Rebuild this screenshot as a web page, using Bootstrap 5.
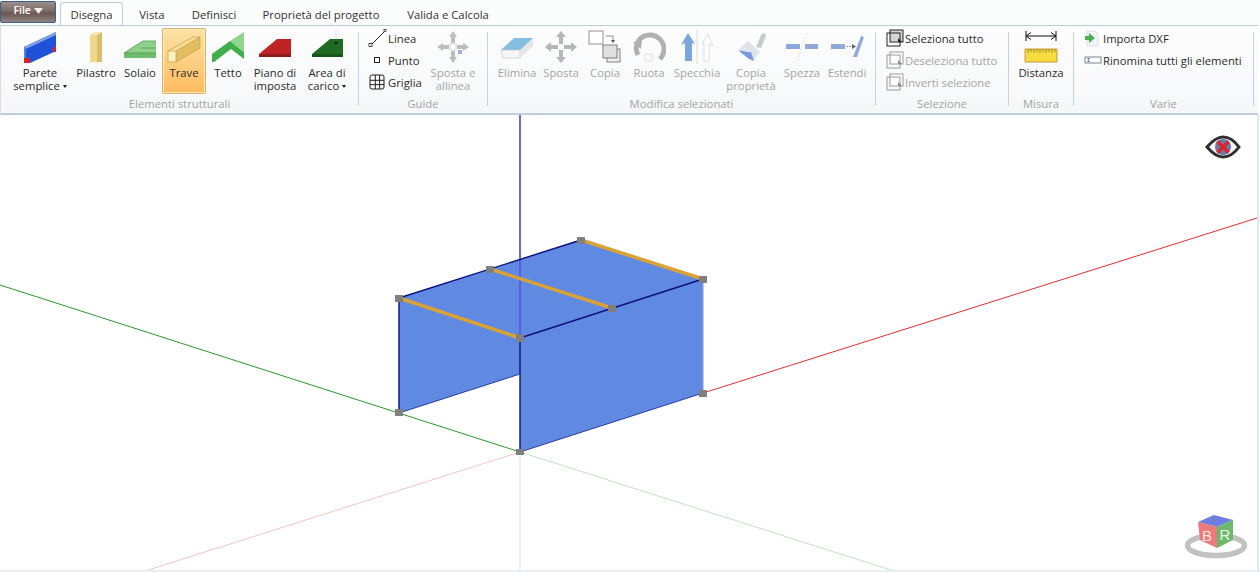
<!DOCTYPE html>
<html lang="it"><head><meta charset="utf-8"><title>Disegna</title>
<link href="https://cdn.jsdelivr.net/npm/bootstrap@5.3.0/dist/css/bootstrap.min.css" rel="stylesheet">
<style>
html,body{height:100%;overflow:hidden}
body{font-family:"Open Sans","Liberation Sans",sans-serif;font-size:11.3px;color:#2b2b2b;background:#fff;width:1260px;height:572px}
.top-bar{height:25px;background:#fbfcfc}
.file-btn{width:56px;height:22px;margin-top:1px;padding:0 0 2px;font-size:10.5px;font-weight:600;color:#fff;border:1px solid #3f5f8f;border-radius:2px;background:linear-gradient(#9a8f8c,#7e6b66 45%,#6a5651 55%,#8f8481)}
.file-btn:hover{color:#fff}
.tab-list{margin-left:4px;border:0;height:25px;flex-wrap:nowrap}
.tab-link{display:block;padding:0;height:23px;margin-top:2px;line-height:23px;text-align:center;color:#333;font-size:11.3px;text-decoration:none;border:1px solid transparent;border-bottom:0;white-space:nowrap}
.tab-link.on{background:#fff;border-color:#bccbd9;border-radius:3px 3px 0 0;height:24px}
.w-t1{width:63px}.w-t2{width:58px}.w-t3{width:66px}.w-t4{width:148px}.w-t5{width:106px}
.ribbon{height:90px;background:linear-gradient(#fdfdfe,#f6f7f8);border-top:1px solid #bccbd9;border-bottom:2px solid #bfcfdc;border-left:1px solid #d5dfe8;width:1258px}
.rb-group{flex:none;padding-top:2px}
.g1{width:357px}.g2{width:128px}.g3{width:387px}.g4{width:132px}.g5{width:64px}.g6{width:179px}
.rb-sep{flex:none;width:1px;height:74px;margin-top:6px;background:#c5d2df}
.rb-items{height:66px}
.rb-label{height:19px;line-height:19px;text-align:center;color:#a3a3a3;font-size:11.3px}
.rb-big{flex:none;display:flex;flex-direction:column;justify-content:flex-start;align-items:center;height:66px;padding:0;border:1px solid transparent;border-radius:2px;font-size:11.3px;line-height:13px;color:#2b2b2b;text-align:center;white-space:nowrap}
.rb-big svg{display:block;margin:1px auto 2px;flex:none}
.rb-big.disabled{color:#a5a5a5;opacity:1;border-color:transparent}
.rb-big.sel{background:linear-gradient(#fde3a5,#fdbb5f);border-color:#d8b26a;box-shadow:inset 0 0 0 1px #fee9b8}
.caret-mini{display:inline-block;border:2.5px solid transparent;border-top:3px solid #222;border-bottom:0;vertical-align:2px;margin-left:3px}
.w44{width:44px}.w46{width:46px}.w50{width:50px}.w52{width:52px}.w54{width:54px}.w56{width:56px}
.ml11{margin-left:11px}.mr6{margin-right:6px}.ml7{margin-left:7px}.ml5{margin-left:5px}
.rows1{width:61px;margin-left:8px}
.rows-up{margin-top:-1px;margin-bottom:1px}
.rb-row{height:22px;line-height:21px;white-space:nowrap;font-size:11.3px;color:#2b2b2b}
.rb-row.off{color:#a5a5a5}
.rb-row svg{flex:none}
.ic19{width:19px}
.ic21{width:21px}
.ind10{margin-left:10px}
.stage{height:457px;width:1260px}
.stage svg{display:block}
</style></head>
<body class="d-flex flex-column">
<div class="top-bar d-flex">
  <button class="btn file-btn" type="button">File <svg width="9" height="6" viewBox="0 0 9 6"><path d="M0 0h9L4.500 6z" fill="#f1eeee"/></svg></button>
  <ul class="nav tab-list">
    <li class="nav-item"><a class="tab-link on w-t1" href="#">Disegna</a></li>
    <li class="nav-item"><a class="tab-link w-t2" href="#">Vista</a></li>
    <li class="nav-item"><a class="tab-link w-t3" href="#">Definisci</a></li>
    <li class="nav-item"><a class="tab-link w-t4" href="#">Proprietà del progetto</a></li>
    <li class="nav-item"><a class="tab-link w-t5" href="#">Valida e Calcola</a></li>
  </ul>
</div>
<div class="ribbon d-flex">
  <div class="rb-group g1">
    <div class="rb-items d-flex">
      <button class="btn rb-big w56 ml11 mr6" type="button"><svg width="34" height="34" viewBox="0 0 34 34"><path d="M1 17L33 2v19L7 33H1z" fill="#1f52d6"/><path d="M1 17L33 2l0 3L3 19z" fill="#7f9fe8"/><path d="M1 17l2 2v14H1z" fill="#5a7fe0"/><rect x="1" y="28" width="6" height="5" fill="#d6202a"/><rect x="30" y="17" width="3" height="5" fill="#d6202a"/></svg><span>Parete<br>semplice<span class="caret-mini"></span></span></button>
      <button class="btn rb-big w44" type="button"><svg width="34" height="34" viewBox="0 0 34 34"><path d="M11 5l8-3h4v30H11z" fill="#e8d486"/><path d="M11 5h7v27h-7z" fill="#efd98f"/><path d="M18 5l5-3v30h-5z" fill="#d8bd6c"/><path d="M11 5l4-3h8l-5 3z" fill="#f4e8b8"/></svg><span>Pilastro</span></button>
      <button class="btn rb-big w44" type="button"><svg width="34" height="34" viewBox="0 0 34 34"><path d="M1 23L20 11h13v12z" fill="#8fd18b"/><path d="M1 23h32v5H1z" fill="#6fbd6c"/><path d="M1 23L20 11h13M18 18h15M1 23h32" fill="none" stroke="#4a9c4d" stroke-width=".8"/></svg><span>Solaio</span></button>
      <button class="btn rb-big w44 sel" type="button"><svg width="34" height="34" viewBox="0 0 34 34"><path d="M1 21L26 7h7L9 21z" fill="#f5df95"/><path d="M9 21L33 7v11L9 32z" fill="#e2be62"/><path d="M1 21h8v11H1z" fill="#fbf0c2"/><path d="M1 21L26 7h7L9 21H1v11h8l24-14V7M9 21v11" fill="none" stroke="#c59c47" stroke-width=".7"/></svg><span>Trave</span></button>
      <button class="btn rb-big w44" type="button"><svg width="34" height="34" viewBox="0 0 34 34"><path d="M1 24L20 12 33 3v11l-13-1z" fill="#62c266"/><path d="M1 24L19 11l14 11v7L20 19 3 32H1z" fill="#3fae4b"/><path d="M19 11L33 2v20z" fill="#8ed68d"/></svg><span>Tetto</span></button>
      <button class="btn rb-big w50" type="button"><svg width="34" height="34" viewBox="0 0 34 34"><path d="M1 24L19 9h14v15z" fill="#bf2424"/><path d="M1 24h32v3H1z" fill="#8f1f1f"/></svg><span>Piano di<br>imposta</span></button>
      <button class="btn rb-big w54" type="button"><svg width="34" height="34" viewBox="0 0 34 34"><path d="M26 0v11" stroke="#cfd6cf" stroke-width=".8"/><path d="M2 24L20 9h13v15z" fill="#1f6b24"/><path d="M2 24h31v3H2z" fill="#17551b"/><path d="M24 12h4l-2 3z" fill="#111"/></svg><span>Area di<br>carico<span class="caret-mini"></span></span></button>
    </div>
    <div class="rb-label">Elementi strutturali</div>
  </div>
  <div class="rb-sep"></div>
  <div class="rb-group g2">
    <div class="rb-items d-flex">
      <div class="rows1 rows-up d-flex flex-column">
        <div class="rb-row d-flex align-items-center"><svg class="ic21" height="20" viewBox="0 0 21 20"><path d="M4 17L18 3" stroke="#222" stroke-width="1"/><rect x="2" y="15.500" width="3" height="3" fill="#fff" stroke="#222" stroke-width=".8"/><rect x="17" y="1.500" width="2" height="2" fill="#fff" stroke="#222" stroke-width=".7"/></svg><span>Linea</span></div>
        <div class="rb-row d-flex align-items-center"><svg class="ic21" height="20" viewBox="0 0 21 20"><rect x="7.500" y="7.500" width="5" height="5" fill="#fff" stroke="#222" stroke-width="1"/></svg><span>Punto</span></div>
        <div class="rb-row d-flex align-items-center"><svg class="ic21" height="20" viewBox="0 0 21 20"><path d="M5 3h10a2 2 0 0 1 2 2v10a2 2 0 0 1-2 2H5a2 2 0 0 1-2-2V5a2 2 0 0 1 2-2zM3 8.300h14M3 12.600h14M8.300 3v14M12.600 3v14" fill="none" stroke="#222" stroke-width="1"/></svg><span>Griglia</span></div>
      </div>
      <button class="btn rb-big w50 disabled" type="button"><svg width="34" height="34" viewBox="0 0 34 34"><path d="M17 1l4 6h-2v6h-4V7h-2zM17 33l-4-6h2v-6h4v6h2zM1 17l6-4v2h6v4H7v2zM33 17l-6 4v-2h-6v-4h6v-2z" fill="#b9bfc0"/><rect x="14" y="14" width="6" height="6" fill="#fff" stroke="#c9cdce" stroke-width=".8"/><rect x="22" y="20" width="4" height="4" fill="#a8add8"/></svg><span>Sposta e<br>allinea</span></button>
    </div>
    <div class="rb-label">Guide</div>
  </div>
  <div class="rb-sep"></div>
  <div class="rb-group g3">
    <div class="rb-items d-flex ml7">
      <button class="btn rb-big w44 disabled" type="button"><svg width="34" height="34" viewBox="0 0 34 34"><path d="M1 20L14 8h19l-9 13z" fill="#85bfe0"/><path d="M1 20h19v8H3z" fill="#f6f6f6" stroke="#c8c8c8" stroke-width=".7"/><path d="M20 20l13-12v8L20 28z" fill="#e4e6e8"/></svg><span>Elimina</span></button>
      <button class="btn rb-big w44 disabled" type="button"><svg width="34" height="34" viewBox="0 0 34 34"><path d="M17 1l5 6h-3v7h-4V7h-3zM17 33l-5-6h3v-7h4v7h3zM1 17l6-5v3h7v4H7v3zM33 17l-6 5v-3h-7v-4h7v-3z" fill="#b2b7b8"/></svg><span>Sposta</span></button>
      <button class="btn rb-big w44 disabled" type="button"><svg width="34" height="34" viewBox="0 0 34 34"><rect x="1" y="1" width="14" height="13" fill="#fff" stroke="#777" stroke-width=".8"/><path d="M18 6h7v5" fill="none" stroke="#777" stroke-width=".8"/><path d="M23 10h4l-2 3z" fill="#555"/><rect x="19" y="19" width="13" height="13" fill="#eee" stroke="#666" stroke-width=".8"/><rect x="15" y="15" width="14" height="13" fill="#e0e0e0" stroke="#666" stroke-width=".8"/></svg><span>Copia</span></button>
      <button class="btn rb-big w44 disabled" type="button"><svg width="34" height="34" viewBox="0 0 34 34"><path d="M6 25C1 15 8 5 18 5c8 0 14 7 14 14 0 4-2 8-4 10" fill="none" stroke="#b1b1b1" stroke-width="5"/><path d="M1 12l9-2-1 9z" fill="#b1b1b1"/><rect x="13" y="24" width="7" height="7" fill="none" stroke="#ddd" stroke-width=".8"/></svg><span>Ruota</span></button>
      <button class="btn rb-big w52 disabled" type="button"><svg width="34" height="34" viewBox="0 0 34 34"><path d="M8 3l7 11-3-1v18H5V13l-4 2z" fill="#7ba6dd"/><path d="M17 0v34" stroke="#dedede"/><path d="M28 4l-6 10 2-1v18h5V14l4 2z" fill="#fff" stroke="#d6d6d6" stroke-width=".8"/></svg><span>Specchia</span></button>
      <button class="btn rb-big w56 disabled" type="button"><svg width="34" height="34" viewBox="0 0 34 34"><path d="M4 20l10-9 12 11-7 9z" fill="#dfe3ea"/><path d="M5 21c4-1 8 2 12 1l3 9-5-2z" fill="#7a9ade"/><path d="M22 17l5-12c1-3 5-2 5 1l-5 12z" fill="#c9cccc"/></svg><span>Copia<br>proprietà</span></button>
      <button class="btn rb-big w46 disabled" type="button"><svg width="34" height="34" viewBox="0 0 34 34"><rect x="1" y="14" width="14" height="5" fill="#8fa9dd"/><rect x="20" y="14" width="13" height="5" fill="#8fa9dd"/><path d="M22 3L12 31" stroke="#ecdcb0" stroke-dasharray="2 2"/></svg><span>Spezza</span></button>
      <button class="btn rb-big w44 disabled" type="button"><svg width="34" height="34" viewBox="0 0 34 34"><rect x="1" y="14" width="14" height="5" fill="#8fa9dd"/><path d="M16 16.500h6" stroke="#999" stroke-dasharray="2 1"/><path d="M22 14l4 2.500-4 2.500z" fill="#666"/><path d="M27 27l7-20-3-1-8 21z" fill="#8fa9dd"/></svg><span>Estendi</span></button>
    </div>
    <div class="rb-label">Modifica selezionati</div>
  </div>
  <div class="rb-sep"></div>
  <div class="rb-group g4">
    <div class="rb-items rows-up d-flex flex-column ind10">
      <div class="rb-row d-flex align-items-center"><svg class="ic19" height="20" viewBox="0 0 19 20"><rect x="4" y="2" width="13" height="12" fill="#d5d5d5" stroke="#222"/><rect x="1" y="5" width="13" height="13" fill="none" stroke="#222"/><path d="M12 10l4 4h-4z" fill="#222"/></svg><span>Seleziona tutto</span></div>
      <div class="rb-row off d-flex align-items-center"><svg class="ic19" height="20" viewBox="0 0 19 20"><rect x="4" y="2" width="13" height="12" fill="#fff" stroke="#999"/><rect x="1" y="5" width="13" height="13" fill="none" stroke="#999"/><path d="M12 10l4 4h-4z" fill="#888"/></svg><span>Deseleziona tutto</span></div>
      <div class="rb-row off d-flex align-items-center"><svg class="ic19" height="20" viewBox="0 0 19 20"><rect x="4" y="2" width="13" height="12" fill="#fff" stroke="#999"/><rect x="1" y="5" width="13" height="13" fill="none" stroke="#999"/><path d="M12 10l4 4h-4z" fill="#888"/></svg><span>Inverti selezione</span></div>
    </div>
    <div class="rb-label">Selezione</div>
  </div>
  <div class="rb-sep"></div>
  <div class="rb-group g5">
    <div class="rb-items d-flex ml5">
      <button class="btn rb-big w54" type="button"><svg width="34" height="34" viewBox="0 0 34 34"><path d="M2 1v10M32 1v10M2 6h30M2 6l5-3.500M2 6l5 3.500M32 6l-5-3.500M32 6l-5 3.500" fill="none" stroke="#111" stroke-width="1"/><rect x="1" y="19" width="32" height="13" fill="#f6dc3f" stroke="#c08a20" stroke-width=".8"/><path d="M4 19v4M7 19v3M10 19v4M13 19v3M16 19v4M19 19v3M22 19v4M25 19v3M28 19v4M31 19v3" stroke="#7c6b1c" stroke-width=".7"/></svg><span>Distanza</span></button>
    </div>
    <div class="rb-label">Misura</div>
  </div>
  <div class="rb-sep"></div>
  <div class="rb-group g6">
    <div class="rb-items rows-up d-flex flex-column ind10">
      <div class="rb-row d-flex align-items-center"><svg class="ic19" height="20" viewBox="0 0 19 20"><path d="M3 3h8l3 3v12H3z" fill="#f4f5f6" stroke="#cfd3d6" stroke-width=".7"/><path d="M1 8h4V5l6 5-6 5v-3H1z" fill="#4caf50"/></svg><span>Importa DXF</span></div>
      <div class="rb-row d-flex align-items-center"><svg class="ic19" height="20" viewBox="0 0 19 20"><rect x="1" y="7" width="16" height="6" fill="#fff" stroke="#5a6b7a" stroke-width=".8"/><path d="M3 8.500h3M3 11.500h3M4.500 8.500v3" stroke="#5a6b7a" stroke-width=".7"/></svg><span>Rinomina tutti gli elementi</span></div>
    </div>
    <div class="rb-label">Varie</div>
  </div>
  <div class="rb-sep"></div>
</div>
<div class="stage">
<svg width="1260" height="457" viewBox="0 115 1260 457">
  <path d="M520 452L145 571" stroke="#f1c6c8" stroke-width="1"/>
  <path d="M520 452L894 571" stroke="#bfe3bf" stroke-width="1"/>
  <path d="M520 452V572" stroke="#c9f0f0" stroke-width="1"/>
  <path d="M0 285L520 452" stroke="#2a9a2a" stroke-width="1"/>
  <path d="M703 393L1257 218" stroke="#e03030" stroke-width="1"/>
  <path d="M520 114V338" stroke="#2a2ae0" stroke-width="1"/>
  <g fill="#6089e2">
    <path d="M399 298L520 338V374L399 413z"/>
    <path d="M399 298L581 240L703 279L520 338z"/>
    <path d="M520 338L703 279V393L520 452z"/>
  </g>
  <path d="M520 114V338" stroke="#3c3ce0" stroke-width="1"/>
  <g fill="none" stroke="#0a0f80" stroke-width="1.400">
    <path d="M399 298L581 240"/><path d="M520 338L703 279"/><path d="M399 298V413"/><path d="M520 338V452"/>
  </g>
  <g fill="none" stroke="#2a3aa8" stroke-width="1"><path d="M399 413L520 374"/><path d="M520 452L703 393"/></g>
  <path d="M703 279V393" stroke="#7f9ee8"/>
  <g stroke="#d9a136" stroke-width="3.500">
    <path d="M399 298L520 338"/><path d="M490 269L612 308"/><path d="M581 240L703 279"/>
  </g>
  <g fill="#808080">
    <rect x="395" y="295" width="8" height="7"/><rect x="486" y="266" width="8" height="7"/><rect x="577" y="237" width="8" height="7"/>
    <rect x="699" y="276" width="8" height="7"/><rect x="608" y="305" width="8" height="7"/><rect x="516" y="334" width="8" height="8"/>
    <rect x="395" y="409" width="8" height="7"/><rect x="699" y="390" width="8" height="7"/><rect x="516" y="449" width="8" height="6"/>
  </g>
  <path d="M1207 147c6-7 11-10 16-10s11 3 16 10c-5 7-11 10-16 10s-10-3-16-10z" fill="#f4f4f4" stroke="#2f2f2f" stroke-width="3"/>
  <circle cx="1223" cy="147" r="8" fill="#6a79a8"/>
  <path d="M1217.500 141.500l11 11M1228.500 141.500l-11 11" stroke="#d8242c" stroke-width="3.500"/>
  <ellipse cx="1216" cy="545.500" rx="28.500" ry="10" fill="none" stroke="#c2c2c2" stroke-width="5.500"/>
  <path d="M1198 522L1214 515L1233 520L1217 527z" fill="#6c7fe0"/>
  <path d="M1198 522L1217 527V548L1200 540z" fill="#ec7a7a"/>
  <path d="M1217 527L1233 520V540L1217 548z" fill="#6db86d"/>
  <text x="1207" y="541" font-family="Liberation Sans,sans-serif" font-size="15" fill="#fbe3e3" text-anchor="middle">B</text>
  <text x="1225" y="540" font-family="Liberation Sans,sans-serif" font-size="15" fill="#e3fbe3" text-anchor="middle">R</text>
  <path d="M1258 0V572" stroke="#dbe8f1" stroke-width="2"/>
  <path d="M0 571H1260" stroke="#e3edf3" stroke-width="1.500"/>
</svg>
</div>
<script src="https://cdn.jsdelivr.net/npm/bootstrap@5.3.0/dist/js/bootstrap.bundle.min.js"></script>
</body></html>
